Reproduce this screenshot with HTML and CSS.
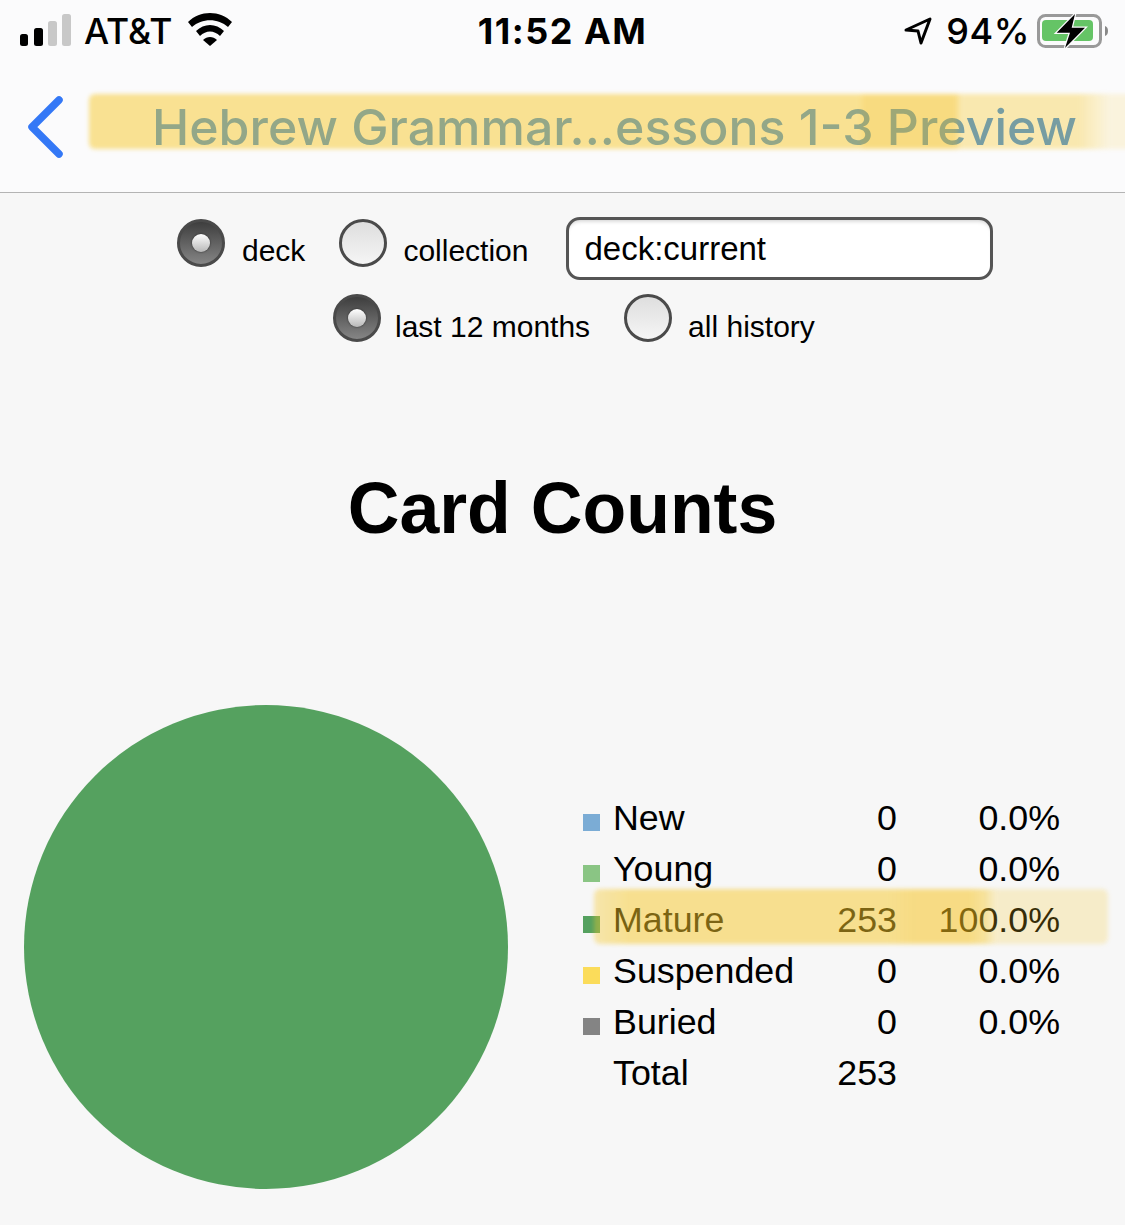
FILE: index.html
```html
<!DOCTYPE html>
<html lang="en">
<head>
    <meta charset="UTF-8">
    <title>Card Counts</title>
    <link rel="stylesheet" href="styles.css">
</head>
<body>
    <header class="top">
        <div class="status">
            <div class="status-left">
                <svg class="signal" width="52" height="32" viewBox="0 0 52 32">
                    <rect x="0" y="20" width="8" height="12" rx="2.5" fill="#000"/>
                    <rect x="14" y="14" width="9" height="18" rx="2.5" fill="#000"/>
                    <rect x="28" y="7" width="9" height="25" rx="2.5" fill="#c8c8c8"/>
                    <rect x="42" y="0" width="9" height="32" rx="2.5" fill="#c8c8c8"/>
                </svg>
                <span class="carrier">AT&amp;T</span>
                <svg class="wifi" width="46" height="34" viewBox="0 0 46 34">
                    <path d="M1 9 C13 -3 33 -3 45 9 L41 14 C31 5 15 5 5 14 Z" fill="#000"/>
                    <path d="M9 18 C17 10 29 10 37 18 L33 23 C27 17 19 17 13 23 Z" fill="#000"/>
                    <path d="M23 33 L16 27 C20 23 26 23 30 27 Z" fill="#000"/>
                </svg>
            </div>
            <div class="clock">11:52 AM</div>
            <div class="status-right">
                <svg class="arrow" width="28" height="28" viewBox="0 0 28 28">
                    <path d="M2 13 L26 2 L17 26 L14 14 Z" fill="none" stroke="#000" stroke-width="3" stroke-linejoin="round"/>
                </svg>
                <span class="battery-pct">94%</span>
                <svg class="battery" width="73" height="36" viewBox="0 0 73 36">
                    <rect x="1.500" y="2.500" width="62" height="31" rx="7" fill="none" stroke="#999" stroke-width="3"/>
                    <rect x="5" y="7" width="51" height="21" rx="4" fill="#65c466"/>
                    <path d="M68 13 C72 14 72 22 68 23 Z" fill="#888"/>
                    <path d="M38 1 L19.700 19.700 L33 19.700 L28 35 L48 14.700 L34.700 14.700 Z" fill="#000" stroke="#fbfbfc" stroke-width="2.500" paint-order="stroke"/>
                </svg>
            </div>
        </div>
        <nav class="nav">
            <svg class="back" width="38" height="64" viewBox="0 0 38 64">
                <path d="M32 5 L5 32 L32 59" fill="none" stroke="#3478f6" stroke-width="7.500" stroke-linecap="round" stroke-linejoin="round"/>
            </svg>
            <div class="nav-title">Hebrew Grammar...essons 1-3 Preview</div>
            <div class="hl hl-title"></div>
        </nav>
    </header>

    <main>
        <div class="opts opts-first">
            <input class="radio" type="radio" name="scope" checked>
            <label class="opt-label">deck</label>
            <input class="radio radio-next" type="radio" name="scope">
            <label class="opt-label opt-tight">collection</label>
            <input class="search" type="text" value="deck:current">
        </div>
        <div class="opts opts-second">
            <input class="radio" type="radio" name="range" checked>
            <label class="opt-label opt-near">last 12 months</label>
            <input class="radio radio-next" type="radio" name="range">
            <label class="opt-label opt-tight">all history</label>
        </div>

        <h1>Card Counts</h1>

        <section class="chart">
            <div class="pie"></div>
            <div class="legend">
                <table>
                    <tr><td><i class="swatch new"></i></td><td>New</td><td class="num">0</td><td class="num">0.0%</td></tr>
                    <tr><td><i class="swatch young"></i></td><td>Young</td><td class="num">0</td><td class="num">0.0%</td></tr>
                    <tr><td><i class="swatch mature"></i></td><td>Mature</td><td class="num">253</td><td class="num">100.0%</td></tr>
                    <tr><td><i class="swatch suspended"></i></td><td>Suspended</td><td class="num">0</td><td class="num">0.0%</td></tr>
                    <tr><td><i class="swatch buried"></i></td><td>Buried</td><td class="num">0</td><td class="num">0.0%</td></tr>
                    <tr><td></td><td>Total</td><td class="num">253</td><td></td></tr>
                </table>
                <div class="hl hl-row"></div>
            </div>
        </section>
    </main>
</body>
</html>
```

FILE: styles.css
```css
body {
    margin: 0;
    height: 1225px;
    overflow: hidden;
    background-color: #f7f7f7;
    color: #000;
    font-family: "Liberation Sans", Arial, sans-serif;
}

.top {
    background-color: #fbfbfc;
    border-bottom: 1px solid #b4b4b4;
}
.status {
    display: grid;
    grid-template-columns: 1fr auto 1fr;
    align-items: center;
    height: 62px;
    padding: 0 15px;
    font-family: Inter, sans-serif;
    font-size: 36px;
    font-weight: 500;
}
.status-left {
    display: flex;
    align-items: center;
    padding-left: 5px;
}
.signal {
    margin-right: 12px;
    margin-top: -3px;
}
.wifi {
    margin-left: 15px;
    margin-top: -3px;
}
.carrier {
    font-size: 35.500px;
}
.clock {
    font-weight: 700;
    letter-spacing: 1.500px;
}
.status-right {
    display: flex;
    align-items: center;
    justify-content: flex-end;
}
.arrow {
    margin-right: 14px;
}
.battery-pct {
    margin-right: 7px;
    letter-spacing: 0.600px;
}
.nav {
    position: relative;
    display: flex;
    align-items: center;
    height: 130px;
    padding-left: 27px;
}
.back {
    flex: none;
    margin-top: -1px;
}
.nav-title {
    margin-left: 87px;
    font-family: Inter, sans-serif;
    font-size: 50px;
    font-weight: 500;
    color: #2f86e8;
    white-space: nowrap;
}

/* marker strokes drawn over the screenshot */
.hl {
    position: absolute;
    filter: blur(2px);
    border-radius: 6px;
}
.hl-title {
    left: 89px;
    right: -10px;
    top: 32px;
    height: 55px;
    background: linear-gradient(90deg,
        rgba(247, 200, 40, 0.5) 0,
        rgba(247, 200, 40, 0.5) 770px,
        rgba(247, 195, 30, 0.56) 775px,
        rgba(247, 195, 30, 0.56) 866px,
        rgba(247, 200, 40, 0.36) 872px,
        rgba(247, 200, 40, 0.36) 990px,
        rgba(247, 200, 40, 0.14) 1020px);
}

.opts {
    display: flex;
    align-items: flex-start;
}
.opts-first {
    padding: 24px 0 0 177px;
    height: 75px;
}
.opts-second {
    padding-left: 333px;
}
.opts-second .opt-label {
    padding-top: 18px;
}
.radio {
    appearance: none;
    position: relative;
    flex: none;
    box-sizing: border-box;
    width: 48px;
    height: 48px;
    margin: 2px 0 0;
    border: 3px solid #4a4a4a;
    border-radius: 50%;
    background: linear-gradient(#dedede, #f5f5f5);
}
.radio:checked {
    background: linear-gradient(#3e3e3e, #858585);
}
.radio:checked::after {
    content: "";
    position: absolute;
    left: 12px;
    top: 12px;
    width: 18px;
    height: 18px;
    border-radius: 50%;
    background: linear-gradient(#fff, #b8b8b8);
    box-shadow: 0 0 2px #222;
}
.radio-next {
    margin-left: 34px;
}
.opt-label {
    margin-left: 17px;
    padding-top: 17px;
    font-size: 30px;
    line-height: 34px;
}
.opt-tight {
    margin-left: 16px;
}
.opt-near {
    margin-left: 14px;
}
.search {
    box-sizing: border-box;
    width: 427px;
    height: 63px;
    margin-left: 38px;
    padding: 0 15px;
    border: 3px solid #555;
    border-radius: 14px;
    background-color: #fff;
    font-family: "Liberation Sans", Arial, sans-serif;
    font-size: 33px;
    color: #000;
    box-shadow: inset 0 4px 4px -3px #ccc;
}

h1 {
    margin: 122px 0 0;
    font-size: 71.600px;
    line-height: 84px;
    text-align: center;
}

.chart {
    display: flex;
    align-items: center;
    margin-top: 155px;
    padding-left: 24px;
}
.pie {
    flex: none;
    width: 484px;
    height: 484px;
    border-radius: 50%;
    background-color: #55a15f;
}
.legend {
    position: relative;
    margin-left: 75px;
    margin-bottom: 2px;
}
table {
    table-layout: fixed;
    width: 477px;
    border-collapse: collapse;
    font-size: 35.800px;
}
td {
    height: 51px;
    padding: 0;
}
td:nth-child(1) { width: 30px; }
td:nth-child(2) { width: 201px; }
td:nth-child(3) { width: 83px; }
.num {
    text-align: right;
}
.swatch {
    display: block;
    width: 17px;
    height: 17px;
    margin-top: 7px;
}
.new { background-color: #7bacd5; }
.young { background-color: #8ac584; }
.mature { background-color: #55a15f; }
.suspended { background-color: #fbdc5a; }
.buried { background-color: #848484; }

.hl-row {
    left: 11px;
    top: 96px;
    width: 514px;
    height: 55px;
    background: linear-gradient(90deg,
        rgba(247, 200, 40, 0.36) 0,
        rgba(247, 200, 40, 0.5) 35px,
        rgba(247, 200, 40, 0.5) 292px,
        rgba(247, 195, 30, 0.53) 320px,
        rgba(247, 195, 30, 0.53) 376px,
        rgba(247, 200, 40, 0.45) 390px,
        rgba(247, 200, 40, 0.22) 402px,
        rgba(247, 200, 40, 0.22) 514px);
}
```
